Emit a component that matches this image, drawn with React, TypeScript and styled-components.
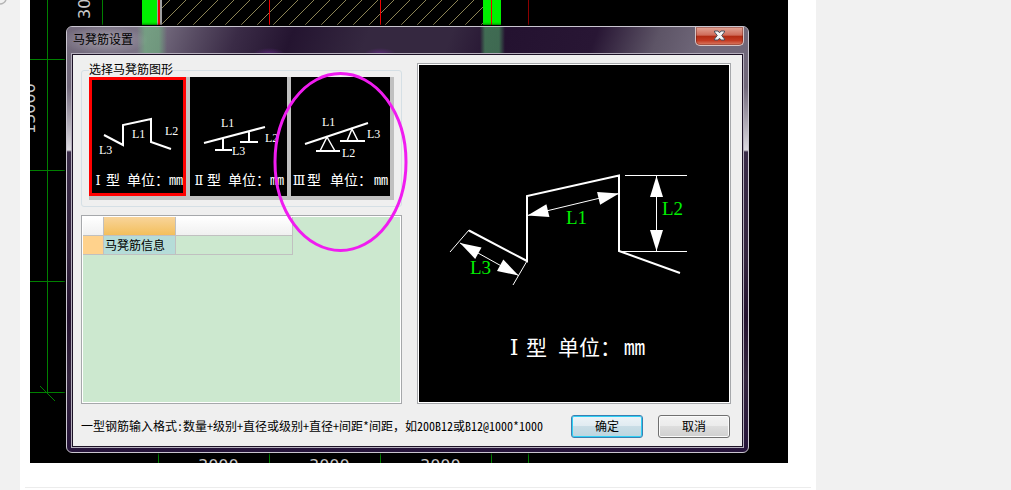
import React, { useState } from "react";
import styled, { createGlobalStyle, css } from "styled-components";

const uiFont = `"Noto Sans Mono CJK SC", "Noto Sans CJK SC", sans-serif`;
const drawingFont = `"Liberation Serif", "DejaVu Serif", serif`;

const GlobalStyle = createGlobalStyle`
  *, *::before, *::after { box-sizing: border-box; }
  body {
    margin: 0;
    background: #f1f1f1;
    font: 12px/14px ${uiFont};
    color: #000;
  }
  button { font: inherit; color: inherit; }
`;

const Page = styled.div`
  display: flex;
  position: relative;
  min-height: 100vh;
  padding: 0 195px 0 20px;
`;

const Curl = styled.svg`
  position: absolute;
  left: 0;
  top: 0;
`;

const Article = styled.main`
  flex: 1;
  min-width: 0;
  background: #fff;
`;

const Stage = styled.section`
  position: relative;
  margin: 0 28px 0 10px;
  padding: 26px 39px 10px 36px;
  overflow: hidden;
  background: #000;
`;

const Backdrop = styled.svg`
  position: absolute;
  left: 0;
  top: 0;
`;

const Divider = styled.hr`
  margin: 24px 5px 0;
  border: 0;
  border-top: 1px solid #ececec;
`;

const Dialog = styled.div`
  position: relative;
  padding: 0 5px 5px;
  border: 1px solid #c9c5cf;
  border-radius: 6px;
  background: linear-gradient(#71687a 0, #71687a 60px, #dcdae0 123px, #3a2c48 125px, #35263f 230px, #24122f 290px, #35263f 350px, #26143a 100%);
  box-shadow: 0 0 3px 1px #000;
`;

const TitleBar = styled.header`
  display: flex;
  align-items: flex-start;
  justify-content: space-between;
  height: 27px;
  margin: 0 -5px;
  padding: 0 4px 0 6px;
  border-radius: 5px 5px 0 0;
  background:
    radial-gradient(ellipse 44px 14px at 37px 13px, #ffffff50, #ffffff00),
    linear-gradient(90deg, #50b06000 70px, #70b88099 78px, #70b88099 92px, #50b06000 100px),
    linear-gradient(90deg, #50b06000 413px, #4a9060b0 418px, #4a9060b0 432px, #50b06000 438px),
    radial-gradient(ellipse 16px 6px at 202px 27px, #6a2a90b0, #6a2a9000),
    radial-gradient(ellipse 16px 6px at 313px 27px, #6a2a90b0, #6a2a9000),
    linear-gradient(110deg, #71687a 0, #7c7486 12%, #574b62 19%, #3a2b46 25%, #241430 33%, #352840 44%, #352840 56%, #241230 64%, #281634 77%, #5d5466 86%, #70687a 93%);
`;

const Title = styled.h1`
  margin: 0;
  padding-top: 3px;
  font-size: 12px;
  line-height: 18px;
  font-weight: 400;
`;

const CloseButton = styled.button`
  display: flex;
  align-items: center;
  justify-content: center;
  width: 49px;
  height: 19px;
  padding: 0 0 2px;
  border: 1px solid #d8c4c4;
  border-top: 0;
  border-radius: 0 0 5px 5px;
  background: linear-gradient(#e2a698 0, #cf6a58 46%, #b02a12 50%, #c43a22 75%, #dc8068 100%);
  box-shadow: inset 0 0 0 1px #5c1a1466;
`;

const Client = styled.div`
  padding: 8px 11px 8px 8px;
  border: 1px solid #1c1226;
  background: #efefef;
  box-shadow: 0 0 0 1px #b5afbd;
`;

const Columns = styled.div`
  display: grid;
  grid-template-columns: 321px minmax(0, 1fr);
  gap: 15px;
`;

const LeftColumn = styled.div`
  display: flex;
  flex-direction: column;
  gap: 8px;
`;

const ShapeGroup = styled.fieldset`
  min-width: 0;
  margin: 0;
  padding: 0 7px 6px;
  border: 1px solid #d5dfe5;
  border-radius: 3px;

  legend {
    padding: 0;
    height: 14px;
    line-height: 12px;
    background: #efefef;
  }
`;

const ShapeStrip = styled.div`
  display: flex;
  gap: 4px;
  padding: 0 4px 4px 0;
  background: #c0c0c0;
`;

const ShapeButton = styled.button<{ $grow?: boolean; $selected: boolean }>`
  position: relative;
  display: block;
  flex: ${(p) => (p.$grow ? "1 1 97px" : "0 0 97px")};
  height: 119px;
  padding: 0;
  border: 0;
  background: #000;

  svg { display: block; }

  ${(p) =>
    p.$selected &&
    css`
      &::after {
        content: "";
        position: absolute;
        inset: 0;
        border: 3px solid #f00;
      }
    `}
`;

const Sunken = styled.div`
  border: 1px solid #a6a8ab;
  padding: 1px;
  background: #fff;
`;

const GridPanel = styled(Sunken)`
  flex: 1;
  display: flex;
`;

const GridBody = styled.div`
  flex: 1;
  background: #cce8cf;
`;

const InfoTable = styled.table`
  table-layout: fixed;
  width: 210px;
  border-spacing: 0;

  th, td {
    height: 19px;
    padding: 0 1px;
    border-right: 1px solid #c0c0c0;
    border-bottom: 1px solid #c0c0c0;
    text-align: left;
    font-weight: 400;
    line-height: 16px;
    white-space: nowrap;
  }
`;

const HeadCell = styled.th<{ $active?: boolean }>`
  background: ${(p) =>
    p.$active ? "linear-gradient(#f8d49a, #f3bf5c)" : "linear-gradient(#fff, #f0f0f0)"};
`;

const RowMarker = styled.td`
  background: #ffd28c;
`;

const NameCell = styled.td`
  background: #b5dcd8;
`;

const Preview = styled(Sunken)`
  display: flex;

  > div {
    flex: 1;
    display: flex;
    justify-content: center;
    background: #000;
  }
`;

const Footer = styled.footer`
  display: flex;
  align-items: center;
  gap: 15px;
  margin-top: 11px;
  padding-right: 1px;

  p {
    flex: 1;
    margin: 0;
    padding-bottom: 2px;
    white-space: nowrap;
  }
`;

const PushButton = styled.button<{ $primary?: boolean }>`
  width: 72px;
  height: 23px;
  padding: 0 0 2px;
  border: 1px solid ${(p) => (p.$primary ? "#3c7fb1" : "#707070")};
  border-radius: 3px;
  background: ${(p) =>
    p.$primary
      ? "linear-gradient(#eef4f8 0, #e0ebf1 48%, #c9dde6 50%, #bcd5df 100%)"
      : "linear-gradient(#f2f2f2 0, #ebebeb 48%, #dddddd 50%, #cfcfcf 100%)"};
  box-shadow: inset 0 0 0 1px ${(p) => (p.$primary ? "#2fd0f5" : "#fbfbfb")};
`;

const Highlight = styled.svg`
  position: absolute;
  left: 205px;
  top: 44px;
  pointer-events: none;
`;

const range = (n: number) => Array.from({ length: n }, (_, i) => i);

function CadBackdrop() {
  return (
    <Backdrop width="758" height="463" aria-hidden="true">
      <defs>
        <clipPath id="slab">
          <rect x="132" y="0" width="321" height="25" />
        </clipPath>
      </defs>
      <g stroke="#8c8455" strokeWidth="1" clipPath="url(#slab)">
        {range(22).map((i) => (
          <line key={i} x1={28 + i * 16} y1="112" x2={140 + i * 16} y2="0" />
        ))}
      </g>
      <g stroke="#008000" strokeWidth="1">
        <path d="M17.5 0V392M72.5 0V25M0 59.5H35M0 170.5H35M0 281.5H35M0 392.5H35M10 386L25 401" fill="none" />
        <path d="M128.5 453V463M239.5 453V463M350.5 453V463M461.5 453V463M498.5 453V463" fill="none" />
      </g>
      <rect x="112" y="0" width="15" height="25" fill="#00f000" />
      <rect x="127" y="0" width="5" height="25" fill="#a0a0a0" />
      <rect x="453" y="0" width="18" height="25" fill="#00f000" />
      <path d="M129 0V25" stroke="#f00000" strokeWidth="2" />
      <path d="M239.5 0V25M350.5 0V25M461.5 0V25" stroke="#f00000" />
      <path d="M498.5 0V25" stroke="#8c0000" />
      <g fill="#c8c8c8" fontFamily="'DejaVu Sans', sans-serif" fontSize="16">
        <text transform="translate(60 19) rotate(-90)">3000</text>
        <text transform="translate(5 134) rotate(-90)">15000</text>
        <text x="168" y="471">3000</text>
        <text x="279" y="471">3000</text>
        <text x="390" y="471">3000</text>
      </g>
    </Backdrop>
  );
}

interface Label {
  text: string;
  x: number;
  y: number;
}

interface Shape {
  numeral: string;
  path: string;
  thin?: string;
  labels: Label[];
  caption: [number, number, number, number];
}

const shapes: Shape[] = [
  {
    numeral: "Ⅰ",
    path: "M15 58L34 68V48L62 42V65L82 72",
    labels: [
      { text: "L1", x: 43, y: 61 },
      { text: "L2", x: 76, y: 58 },
      { text: "L3", x: 10, y: 77 },
    ],
    caption: [9, 17, 38, 80],
  },
  {
    numeral: "Ⅱ",
    path: "M14 66L75 50M33 61V73M25 73H42M59 54V65M50 65H68",
    labels: [
      { text: "L1", x: 31, y: 50 },
      { text: "L2", x: 75, y: 65 },
      { text: "L3", x: 42, y: 78 },
    ],
    caption: [9, 17, 38, 80],
  },
  {
    numeral: "Ⅲ",
    path: "M14 67L77 46M25 74H49M49 64H74",
    thin: "M29 74L36 60L44 74M56 64L61 52L67 64",
    labels: [
      { text: "L1", x: 31, y: 49 },
      { text: "L2", x: 51, y: 80 },
      { text: "L3", x: 76, y: 61 },
    ],
    caption: [8, 16, 39, 83],
  },
];

function ShapeDrawing({ shape }: { shape: Shape }) {
  const [numeralX, typeX, unitX, mmX] = shape.caption;
  return (
    <svg width="97" height="119" fill="#fff" overflow="visible">
      <path d={shape.path} fill="none" stroke="#fff" strokeWidth="2" />
      {shape.thin && <path d={shape.thin} fill="none" stroke="#fff" strokeWidth="1.5" />}
      <g fontFamily={drawingFont} fontSize="12">
        {shape.labels.map((l) => (
          <text key={l.text} x={l.x} y={l.y}>
            {l.text}
          </text>
        ))}
      </g>
      <text y="108" fontSize="14" fontFamily={uiFont}>
        <tspan x={numeralX} textAnchor="middle" fontFamily={drawingFont} fontSize="13">
          {shape.numeral}
        </tspan>
        <tspan x={typeX}>型 </tspan>
        <tspan x={unitX}>单位：</tspan>
        <tspan x={mmX}>mm</tspan>
      </text>
    </svg>
  );
}

type Point = [number, number];

function arrowHead([tx, ty]: Point, [fx, fy]: Point) {
  const len = Math.hypot(tx - fx, ty - fy);
  const ux = (tx - fx) / len;
  const uy = (ty - fy) / len;
  const bx = tx - ux * 21;
  const by = ty - uy * 21;
  return `${tx},${ty} ${bx - uy * 6.5},${by + ux * 6.5} ${bx + uy * 6.5},${by - ux * 6.5}`;
}

function Dimension({ from, to }: { from: Point; to: Point }) {
  return (
    <g fill="#fff">
      <line x1={from[0]} y1={from[1]} x2={to[0]} y2={to[1]} stroke="#fff" />
      <polygon points={arrowHead(from, to)} />
      <polygon points={arrowHead(to, from)} />
    </g>
  );
}

function PreviewDrawing() {
  return (
    <svg width="310" height="337">
      <path d="M50 165.5L108 196V131L200 110.5V186L261 208" fill="none" stroke="#fff" strokeWidth="2" />
      <path d="M50 165L31 187M108 196L94 220M206 110.5H268M200 186.5H268" fill="none" stroke="#fff" />
      <Dimension from={[41, 178]} to={[99.5, 210.5]} />
      <Dimension from={[108.5, 150.5]} to={[200, 128.5]} />
      <Dimension from={[237.5, 111]} to={[237.5, 186]} />
      <g fill="#00f000" fontFamily={drawingFont} fontSize="19">
        <text x="147" y="159">L1</text>
        <text x="243" y="150">L2</text>
        <text x="51" y="209">L3</text>
      </g>
      <text y="290" fill="#fff" fontSize="21" fontFamily={uiFont}>
        <tspan x="95" textAnchor="middle" fontFamily={drawingFont} fontSize="22">Ⅰ</tspan>
        <tspan x="107">型 </tspan>
        <tspan x="139">单位：</tspan>
        <tspan x="205">mm</tspan>
      </text>
    </svg>
  );
}

export default function App() {
  const [selected, setSelected] = useState(0);

  return (
    <>
      <GlobalStyle />
      <Page>
        <Curl width="8" height="7" aria-hidden="true">
          <path d="M0 4Q4 4 6 0" fill="none" stroke="#b4b4b4" strokeWidth="1.5" />
        </Curl>
        <Article>
          <Stage>
            <CadBackdrop />
            <Dialog role="dialog" aria-labelledby="dialog-title">
              <TitleBar>
                <Title id="dialog-title">马凳筋设置</Title>
                <CloseButton type="button" aria-label="关闭">
                  <svg width="13" height="11" viewBox="0 0 13 11">
                    <path
                      d="M1.5 1H5L6.5 2.8L8 1H11.5V2L8.7 5.5L11.5 9V10H8L6.5 8.2L5 10H1.5V9L4.3 5.5L1.5 2Z"
                      fill="#f4f4f4"
                      stroke="#4a4f5c"
                    />
                  </svg>
                </CloseButton>
              </TitleBar>
              <Client>
                <Columns>
                  <LeftColumn>
                    <ShapeGroup>
                      <legend>选择马凳筋图形</legend>
                      <ShapeStrip>
                        {shapes.map((shape, i) => (
                          <ShapeButton
                            key={shape.numeral}
                            type="button"
                            aria-pressed={i === selected}
                            $selected={i === selected}
                            $grow={i === shapes.length - 1}
                            onClick={() => setSelected(i)}
                          >
                            <ShapeDrawing shape={shape} />
                          </ShapeButton>
                        ))}
                      </ShapeStrip>
                    </ShapeGroup>
                    <GridPanel>
                      <GridBody>
                        <InfoTable>
                          <colgroup>
                            <col width="21" />
                            <col width="72" />
                            <col width="117" />
                          </colgroup>
                          <thead>
                            <tr>
                              <HeadCell />
                              <HeadCell $active />
                              <HeadCell />
                            </tr>
                          </thead>
                          <tbody>
                            <tr>
                              <RowMarker />
                              <NameCell>马凳筋信息</NameCell>
                              <td />
                            </tr>
                          </tbody>
                        </InfoTable>
                      </GridBody>
                    </GridPanel>
                  </LeftColumn>
                  <Preview>
                    <div>
                      <PreviewDrawing />
                    </div>
                  </Preview>
                </Columns>
                <Footer>
                  <p>一型钢筋输入格式:数量+级别+直径或级别+直径+间距*间距，如200B12或B12@1000*1000</p>
                  <PushButton type="submit" $primary>
                    确定
                  </PushButton>
                  <PushButton type="button">取消</PushButton>
                </Footer>
              </Client>
              <Highlight width="136" height="182" aria-hidden="true">
                <ellipse cx="68.5" cy="91" rx="65.5" ry="88.5" fill="none" stroke="#f01cf0" strokeWidth="3" />
              </Highlight>
            </Dialog>
          </Stage>
          <Divider />
        </Article>
      </Page>
    </>
  );
}
